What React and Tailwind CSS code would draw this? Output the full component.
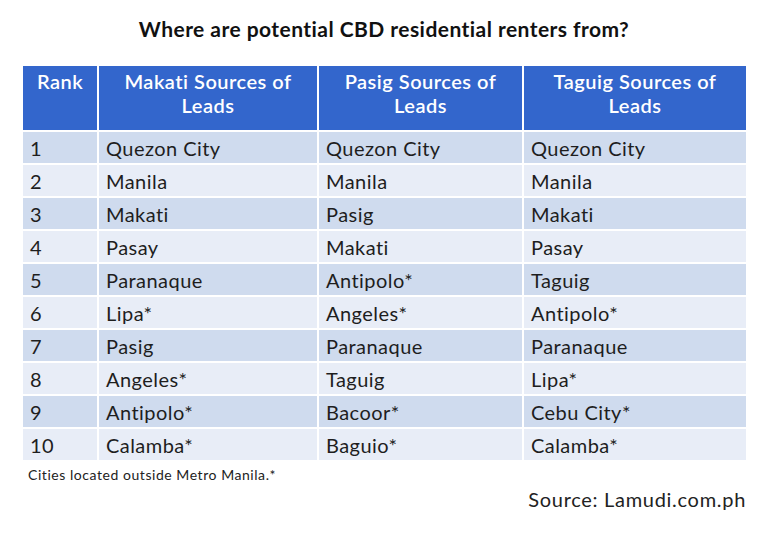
import React from "react";

const rows = [
  ["1", "Quezon City", "Quezon City", "Quezon City"],
  ["2", "Manila", "Manila", "Manila"],
  ["3", "Makati", "Pasig", "Makati"],
  ["4", "Pasay", "Makati", "Pasay"],
  ["5", "Paranaque", "Antipolo*", "Taguig"],
  ["6", "Lipa*", "Angeles*", "Antipolo*"],
  ["7", "Pasig", "Paranaque", "Paranaque"],
  ["8", "Angeles*", "Taguig", "Lipa*"],
  ["9", "Antipolo*", "Bacoor*", "Cebu City*"],
  ["10", "Calamba*", "Baguio*", "Calamba*"],
];

export default function App() {
  return (
    <div
      className="w-[768px] h-[536px] bg-white text-[#1e1e1e] flex flex-col"
      style={{ fontFamily: "Lato, 'Open Sans', sans-serif" }}
    >
      <h1 className="text-center text-[21px] font-bold tracking-[0.45px] mt-[16px] leading-[26px] text-[#111]">
        Where are potential CBD residential renters from?
      </h1>

      <table className="ml-[21px] mt-[22px] w-[725px] border-collapse table-fixed">
        <colgroup>
          <col className="w-[76px]" />
          <col className="w-[220px]" />
          <col className="w-[205px]" />
          <col className="w-[224px]" />
        </colgroup>
        <thead>
          <tr className="bg-[#3366cc] text-white h-[66px]">
            <th className="border-2 border-white align-top pt-[3px] text-[20px] font-semibold tracking-[0.5px] leading-[24px]">Rank</th>
            <th className="border-2 border-white align-top pt-[3px] px-2 text-[20px] font-semibold tracking-[0.5px] leading-[24px]">Makati Sources of Leads</th>
            <th className="border-2 border-white align-top pt-[3px] px-2 text-[20px] font-semibold tracking-[0.5px] leading-[24px]">Pasig Sources of Leads</th>
            <th className="border-2 border-white align-top pt-[3px] px-2 text-[20px] font-semibold tracking-[0.5px] leading-[24px]">Taguig Sources of Leads</th>
          </tr>
        </thead>
        <tbody>
          {rows.map((r, i) => (
            <tr key={r[0]} className={`h-[33px] ${i % 2 === 0 ? "bg-[#cfdbee]" : "bg-[#e8edf7]"}`}>
              {r.map((c, j) => (
                <td key={j} className="border-2 border-white pl-[7px] text-[20px] tracking-[0.45px] leading-[24px] whitespace-nowrap">
                  {c}
                </td>
              ))}
            </tr>
          ))}
        </tbody>
      </table>

      <p className="ml-[28px] mt-[4px] text-[14px] tracking-[0.55px] leading-[18px] text-[#222]">
        Cities located outside Metro Manila.*
      </p>
      <p className="self-end mr-[22px] mt-[3px] text-[20px] tracking-[0.7px] leading-[24px] text-[#222]">
        Source: Lamudi.com.ph
      </p>
    </div>
  );
}
